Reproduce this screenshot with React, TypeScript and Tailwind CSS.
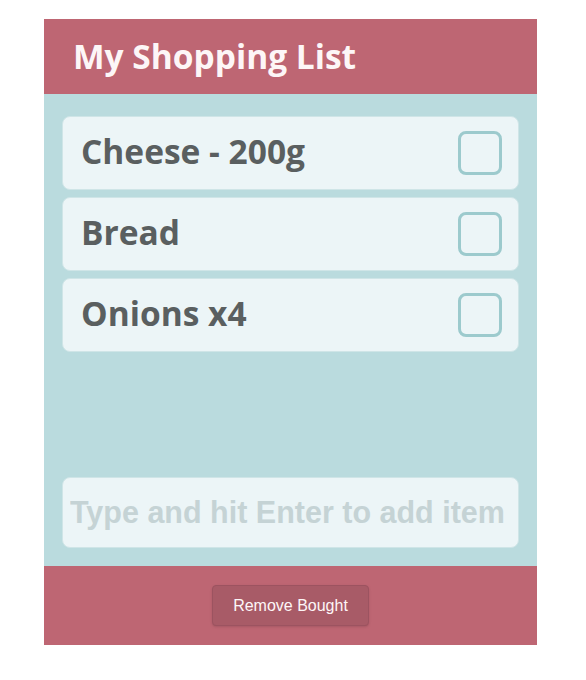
import React, { useState } from 'react';

interface Item {
  id: number;
  name: string;
  bought: boolean;
}

const App: React.FC = () => {
  const [items, setItems] = useState<Item[]>([
    { id: 1, name: 'Cheese - 200g', bought: false },
    { id: 2, name: 'Bread', bought: false },
    { id: 3, name: 'Onions x4', bought: false },
  ]);
  const [text, setText] = useState('');

  const toggle = (id: number) =>
    setItems(items.map((i) => (i.id === id ? { ...i, bought: !i.bought } : i)));

  const handleKey = (e: React.KeyboardEvent<HTMLInputElement>) => {
    if (e.key === 'Enter' && text.trim()) {
      setItems([...items, { id: Date.now(), name: text.trim(), bought: false }]);
      setText('');
    }
  };

  return (
    <div className="min-h-[680px] bg-white pt-[19px]">
      <div className="ml-[44px] w-[493px] flex flex-col">
        <div className="h-[75px] bg-[#be6673] flex items-center pl-[29px]">
          <h1 className="text-[#fdf6f7] font-bold text-[33.5px] font-['Open_Sans',sans-serif] leading-none">
            My Shopping List
          </h1>
        </div>

        <div className="h-[472px] bg-[#badbde] px-[18px] pt-[22px] pb-[18px] flex flex-col">
          <div className="flex flex-col gap-[7px]">
            {items.map((item) => (
              <div
                key={item.id}
                className="h-[74px] bg-[#ecf5f7] rounded-lg border border-[#cfe5e7] flex items-center justify-between pl-[18px] pr-[16px]"
              >
                <span
                  className={`font-['Open_Sans',sans-serif] font-bold text-[33.5px] leading-none -mt-[3px] text-[#5a5f60] ${item.bought ? 'line-through opacity-50' : ''}`}
                >
                  {item.name}
                </span>
                <button
                  onClick={() => toggle(item.id)}
                  className="w-[44px] h-[44px] rounded-lg border-[3px] border-[#9ccacd] flex items-center justify-center"
                >
                  {item.bought && <span className="w-4 h-4 rounded bg-[#9ccacd]" />}
                </button>
              </div>
            ))}
          </div>

          <input
            value={text}
            onChange={(e) => setText(e.target.value)}
            onKeyDown={handleKey}
            placeholder="Type and hit Enter to add item"
            className="mt-auto h-[71px] w-full bg-[#ecf5f7] rounded-lg border border-[#cfe5e7] px-[7px] font-['Liberation_Sans',Arial,sans-serif] font-bold text-[30.5px] text-[#5a5f60] placeholder:text-[#c5d3d5] focus:outline-none"
          />
        </div>

        <div className="h-[79px] bg-[#be6673] flex items-center justify-center">
          <button
            onClick={() => setItems(items.filter((i) => !i.bought))}
            className="w-[157px] h-[41px] rounded bg-[#a85b67] border border-[#9c5360] text-[#fdf6f7] text-[16px] font-['Liberation_Sans',Arial,sans-serif] shadow-sm"
          >
            Remove Bought
          </button>
        </div>
      </div>
    </div>
  );
};

export default App;
